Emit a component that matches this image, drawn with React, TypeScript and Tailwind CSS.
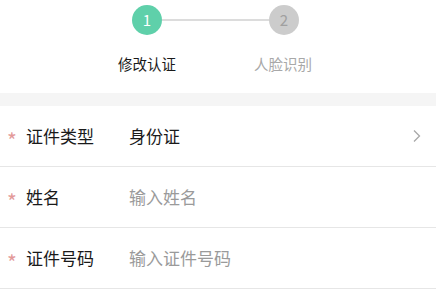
import React from "react";

const font = { fontFamily: '"Noto Sans CJK SC", "Noto Sans", sans-serif' };

function Row({ label, value, placeholder, arrow }: { label: string; value?: string; placeholder?: string; arrow?: boolean }) {
  return (
    <div className="flex h-[61px] items-center border-b border-[#e6e6e6] bg-white">
      <span className="w-[26px] pl-[7px] text-[21px] leading-none text-[#e39a9a] translate-y-[4px]">*</span>
      <span className="w-[103px] text-[17px] text-[#1a1a1a]">{label}</span>
      <span className={"flex-1 text-[17px] " + (value ? "text-[#1a1a1a]" : "text-[#9a9a9a]")}>{value ?? placeholder}</span>
      {arrow && (
        <svg width="10" height="14" viewBox="0 0 10 14" className="mr-[14px]">
          <path d="M2 1.5 L7.5 7 L2 12.5" fill="none" stroke="#a8a8a8" strokeWidth="1.3" />
        </svg>
      )}
    </div>
  );
}

export default function App() {
  return (
    <div className="w-[436px] h-[289px] overflow-hidden bg-white" style={font}>
      <div className="h-[93px] bg-white">
        <div className="flex items-center pt-[5px] pl-[132px]">
          <div className="w-[30px] h-[30px] rounded-full bg-[#5fd0aa] flex items-center justify-center text-white text-[15px]">1</div>
          <div className="w-[107px] h-[2px] bg-[#dcdcdc]"></div>
          <div className="w-[30px] h-[30px] rounded-full bg-[#cccccc] flex items-center justify-center text-[#a0a0a0] text-[15px]">2</div>
        </div>
        <div className="flex gap-[56px] pl-[107px] mt-[19px] text-[14.5px] leading-[20px]">
          <span className="w-[80px] text-center text-[#1a1a1a]">修改认证</span>
          <span className="w-[80px] text-center text-[#a8a8a8]">人脸识别</span>
        </div>
      </div>
      <div className="h-[13px] bg-[#f5f5f5]"></div>
      <Row label="证件类型" value="身份证" arrow />
      <Row label="姓名" placeholder="输入姓名" />
      <Row label="证件号码" placeholder="输入证件号码" />
    </div>
  );
}
